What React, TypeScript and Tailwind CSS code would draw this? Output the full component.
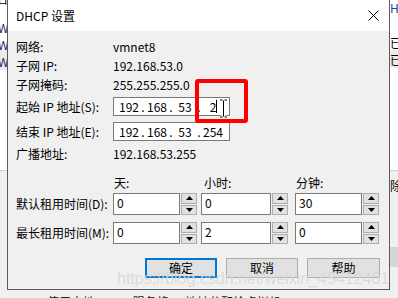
import React from 'react';

const font = { fontFamily: '"Noto Sans CJK SC", "Noto Sans", sans-serif' };

function IpBox({ parts, caret }: { parts: string[]; caret?: boolean }) {
  return (
    <div className="relative flex h-[19px] w-[117px] items-center border border-[#7a7a7a] bg-white pl-[4px] text-[12px] text-black">
      {parts.map((p, i) => (
        <React.Fragment key={i}>
          {i > 0 && <span className="w-[6px] text-center">.</span>}
          <span className="relative w-[22px] text-center">
            {p}
            {caret && i === 3 && (
              <span className="absolute left-[14px] top-[2px] h-[13px] w-px bg-black" />
            )}
          </span>
        </React.Fragment>
      ))}
    </div>
  );
}

function Arrow({ up }: { up?: boolean }) {
  return (
    <svg width="7" height="4" viewBox="0 0 7 4">
      <polygon points={up ? '3.5,0 7,4 0,4' : '0,0 7,0 3.5,4'} fill="#000" />
    </svg>
  );
}

function Spin({ value, w }: { value: string; w: string }) {
  return (
    <div className="flex h-[22px] gap-px">
      <div className={`${w} h-full border border-[#7a7a7a] bg-white pl-[3px] pt-[1px] text-[12px] leading-[16px]`}>{value}</div>
      <div className="flex w-[16px] flex-col gap-px">
        <div className="flex flex-1 items-center justify-center border border-[#adadad] bg-[#e1e1e1]">
          <Arrow up />
        </div>
        <div className="flex flex-1 items-center justify-center border border-[#adadad] bg-[#e1e1e1]">
          <Arrow />
        </div>
      </div>
    </div>
  );
}

function Row({ label, children, h = 'h-[19px]', mt = '' }: { label: string; children: React.ReactNode; h?: string; mt?: string }) {
  return (
    <div className={`flex items-center ${h} ${mt}`}>
      <div className="w-[97px] shrink-0">{label}</div>
      {children}
    </div>
  );
}

export default function App() {
  return (
    <div className="relative h-[298px] w-[398px] overflow-hidden bg-white text-[12px] text-black" style={font}>
      {/* what lies behind the dialog */}
      <div className="absolute left-0 top-[50px] h-[20px] w-[7px] bg-[#ececec]" />
      <div className="absolute left-0 top-[170px] h-[128px] w-[7px] border-t border-[#d0d0d0] bg-[#f0f0f0]" />
      <div className="absolute right-0 top-[50px] h-[18px] w-[9px] bg-[#ececec]" />
      <div className="absolute right-0 top-[170px] h-[128px] w-[9px] border-t border-[#d0d0d0] bg-[#f0f0f0]" />
      <div className="absolute right-0 top-[247px] h-[20px] w-[9px] bg-[#d6d6d6]" />
      <div className="absolute left-[-4px] top-[-9px] text-[12px] leading-[16px]">名</div>
      <div className="absolute left-[-2px] top-[20px] text-[12px] leading-[16px] text-[#1a1a60]">W</div>
      <div className="absolute left-[-2px] top-[37px] text-[12px] leading-[16px] text-[#1a1a60]">W</div>
      <div className="absolute left-[-2px] top-[54px] text-[12px] leading-[16px] text-[#1a1a60]">W</div>
      <div className="absolute left-[390px] top-[0px] text-[12px] leading-[16px] text-[#1a3fb0]">HC</div>
      <div className="absolute left-[390px] top-[35px] text-[12px] leading-[16px]">已,E</div>
      <div className="absolute left-[390px] top-[52px] text-[12px] leading-[16px]">已,E</div>
      <div className="absolute left-[390px] top-[178px] text-[12px] leading-[16px]">除</div>
      <div className="absolute left-0 top-[289px] h-[9px] w-[398px] bg-[#f0f0f0]" />
      <div className="absolute left-[47px] top-[294px] text-[12px] leading-[16px] text-[#222]">使用本地 DHCP 服务将 IP 地址分配给虚拟机</div>

      {/* dialog window */}
      <div className="absolute left-[7px] top-[-1px] flex h-[291px] w-[383px] flex-col border border-[#5b5b5b] bg-[#f0f0f0]">
        <div className="flex h-[31px] shrink-0 items-center justify-between bg-white pl-[8px] pr-[10px]">
          <span className="text-[12px]">DHCP 设置</span>
          <svg width="11" height="11" viewBox="0 0 11 11">
            <path d="M0.5 0.5 L10.5 10.5 M10.5 0.5 L0.5 10.5" stroke="#000" strokeWidth="1" />
          </svg>
        </div>

        <div className="flex flex-col pl-[8px] pr-[9px] pt-[6px]">
          <Row label="网络:"><span>vmnet8</span></Row>
          <Row label="子网 IP:"><span>192.168.53.0</span></Row>
          <Row label="子网掩码:"><span>255.255.255.0</span></Row>
          <Row label="起始 IP 地址(S):" mt="mt-[3px]">
            <IpBox parts={['192', '168', '53', '2']} caret />
          </Row>
          <Row label="结束 IP 地址(E):" mt="mt-[6px]">
            <IpBox parts={['192', '168', '53', '254']} />
          </Row>
          <Row label="广播地址:" mt="mt-[3px]"><span>192.168.53.255</span></Row>

          <div className="mt-[10px] flex h-[19px] items-center">
            <div className="w-[98px] shrink-0" />
            <div className="w-[90px]">天:</div>
            <div className="w-[92px]">小时:</div>
            <div>分钟:</div>
          </div>

          <Row label="默认租用时间(D):" h="h-[22px]" mt="mt-px">
            <div className="flex gap-[4px]">
              <Spin value="0" w="w-[67px]" />
              <Spin value="0" w="w-[70px]" />
            </div>
            <div className="ml-[7px]"><Spin value="30" w="w-[67px]" /></div>
          </Row>
          <Row label="最长租用时间(M):" h="h-[22px]" mt="mt-[7px]">
            <div className="flex gap-[4px]">
              <Spin value="0" w="w-[67px]" />
              <Spin value="2" w="w-[70px]" />
            </div>
            <div className="ml-[7px]"><Spin value="0" w="w-[67px]" /></div>
          </Row>

          <div className="mt-[14px] flex justify-end gap-[9px]">
            <button className="flex h-[20px] w-[72px] items-center justify-center border-2 border-[#0078d7] bg-[#e1e1e1] text-[12px]">确定</button>
            <button className="flex h-[20px] w-[72px] items-center justify-center border border-[#adadad] bg-[#e1e1e1] text-[12px]">取消</button>
            <button className="flex h-[20px] w-[73px] items-center justify-center border border-[#adadad] bg-[#e1e1e1] text-[12px]">帮助</button>
          </div>
        </div>
      </div>

      {/* annotation box and mouse cursor */}
      <div className="absolute left-[195px] top-[79px] h-[44px] w-[53px] rounded-[3px] border-[4px] border-[#ff0000]" />
      <svg className="absolute left-[219px] top-[99px]" width="9" height="19" viewBox="0 0 9 19">
        <path d="M1 1 H3.5 M5.5 1 H8 M4.5 1.5 V17.5 M1 18 H3.5 M5.5 18 H8" stroke="#fff" strokeWidth="3" />
        <path d="M1 1 H3.5 M5.5 1 H8 M4.5 1.5 V17.5 M1 18 H3.5 M5.5 18 H8" stroke="#000" strokeWidth="1" />
      </svg>

      {/* watermark */}
      <div
        className="pointer-events-none absolute left-[117px] top-[269px] text-[16px] leading-[20px] text-[rgba(215,215,215,0.85)]"
        style={{ fontFamily: '"Liberation Sans", Arial, sans-serif' }}
      >
        https://blog.csdn.net/weixin_45412401
      </div>
    </div>
  );
}
